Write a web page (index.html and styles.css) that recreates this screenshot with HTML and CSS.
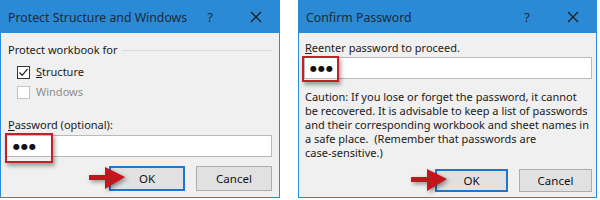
FILE: index.html
```html
<!DOCTYPE html>
<html>
<head>
<meta charset="utf-8">
<link rel="stylesheet" href="styles.css">
</head>
<body>
<div class="page">
  <div class="dialog dialog-left">
    <div class="titlebar">
      <span class="title">Protect Structure and Windows</span>
      <span class="tb-btn">?</span>
      <span class="tb-btn tb-close"><svg width="12" height="12" viewBox="0 0 12 12"><path d="M1 1 L11 11 M11 1 L1 11" stroke="#1a1a1a" stroke-width="1.2" fill="none"/></svg></span>
    </div>
    <div class="body body-left">
      <div class="group-head"><span class="label">Protect workbook for</span><span class="group-line"></span></div>
      <div class="check-row first">
        <span class="checkbox"><svg width="11" height="11" viewBox="0 0 11 11"><path d="M1.5 5.5 L4.2 8.3 L9.6 1.8" stroke="#222" stroke-width="1.3" fill="none"/></svg></span>
        <span class="check-label"><u>S</u>tructure</span>
      </div>
      <div class="check-row disabled">
        <span class="checkbox"></span>
        <span class="check-label">Windows</span>
      </div>
      <div class="label pw-label"><u>P</u>assword (optional):</div>
      <div class="input input-left">
        <span class="dots">&#9679;&#9679;&#9679;</span>
        <span class="highlight hl-left"></span>
      </div>
      <div class="buttons buttons-left">
        <span class="arrow arrow-left"><svg width="40" height="26" viewBox="0 0 40 26"><path d="M1 10 L17 10 L17 2 L37 12 L17 24 L17 15 L1 15 Z" fill="#c4151c"/></svg></span>
        <span class="btn btn-ok">OK</span>
        <span class="btn">Cancel</span>
      </div>
    </div>
  </div>
  <div class="dialog dialog-right">
    <div class="titlebar">
      <span class="title">Confirm Password</span>
      <span class="tb-btn">?</span>
      <span class="tb-btn tb-close"><svg width="12" height="12" viewBox="0 0 12 12"><path d="M1 1 L11 11 M11 1 L1 11" stroke="#1a1a1a" stroke-width="1.2" fill="none"/></svg></span>
    </div>
    <div class="body body-right">
      <div class="label re-label"><u>R</u>eenter password to proceed.</div>
      <div class="input input-right">
        <span class="dots">&#9679;&#9679;&#9679;</span>
        <span class="highlight hl-right"></span>
      </div>
      <div class="caution">Caution: If you lose or forget the password, it cannot<br>be recovered. It is advisable to keep a list of passwords<br>and their corresponding workbook and sheet names in<br>a safe place.&nbsp; (Remember that passwords are<br>case-sensitive.)</div>
      <div class="buttons buttons-right">
        <span class="arrow arrow-right"><svg width="40" height="26" viewBox="0 0 40 26"><path d="M1 10 L17 10 L17 2 L37 12 L17 24 L17 15 L1 15 Z" fill="#c4151c"/></svg></span>
        <span class="btn btn-ok">OK</span>
        <span class="btn">Cancel</span>
      </div>
    </div>
  </div>
</div>
</body>
</html>
```

FILE: styles.css
```css
html, body {
  margin: 0;
  padding: 0;
  background: #ffffff;
}
body {
  width: 600px;
  height: 200px;
  overflow: hidden;
  font-family: "Noto Sans", "Open Sans", sans-serif;
  font-size: 11px;
  color: #1a1a1a;
}
.page {
  display: flex;
  gap: 18px;
  height: 198px;
}
.dialog {
  box-sizing: border-box;
  height: 198px;
  border: 1px solid #2a8ad6;
  background: #f0f0f0;
  display: flex;
  flex-direction: column;
}
.dialog-left { width: 280px; }
.dialog-right { width: 299px; }
.titlebar {
  height: 32px;
  flex: none;
  background: #2a8ad6;
  display: flex;
  align-items: center;
  padding-left: 7px;
  font-size: 12.3px;
  color: #1f2a36;
}
.title { flex: 1; white-space: nowrap; }
.tb-btn {
  width: 46px;
  text-align: center;
  font-size: 13px;
  display: flex;
  justify-content: center;
  align-items: center;
}
.body {
  display: flex;
  flex-direction: column;
}
.body-left { padding: 0 7px 0 5px; }
.body-right { padding: 0 4px 0 5px; }
.label {
  line-height: 16px;
  height: 16px;
  white-space: nowrap;
}
.group-head {
  display: flex;
  align-items: center;
  margin-top: 9px;
  padding-left: 2px;
}
.group-line {
  flex: 1;
  height: 1px;
  background: #dcdcdc;
  margin-left: 5px;
}
.check-row {
  display: flex;
  align-items: center;
  height: 16px;
  padding-left: 11px;
  margin-top: 4px;
}
.check-row.first { margin-top: 6px; }
.checkbox {
  box-sizing: border-box;
  width: 13px;
  height: 13px;
  border: 1px solid #333333;
  background: #ffffff;
  display: flex;
  align-items: center;
  justify-content: center;
}
.check-label { margin-left: 6px; line-height: 16px; }
.disabled .checkbox { border-color: #c4c4c4; }
.disabled .check-label { color: #8d8d8d; }
.pw-label { margin-top: 17px; padding-left: 2px; }
.input {
  position: relative;
  box-sizing: border-box;
  background: #ffffff;
  border: 1px solid #b9b9b9;
  display: flex;
  align-items: center;
}
.input-left { height: 22px; margin-top: 2px; padding-left: 6px; }
.input-right { height: 22px; margin-top: 1px; padding-left: 5px; }
.dots {
  font-size: 8px;
  letter-spacing: 1px;
  color: #111;
  font-family: "DejaVu Sans", sans-serif;
}
.highlight {
  position: absolute;
  box-sizing: border-box;
  border: 2px solid #c4202a;
  box-shadow: 2px 3px 4px rgba(0, 0, 0, 0.35);
}
.hl-left { left: -2px; top: -3px; width: 48px; height: 30px; }
.hl-right { left: -3px; top: -2px; width: 37px; height: 26px; }
.re-label { margin-top: 7px; padding-left: 1px; }
.caution {
  margin-top: 11px;
  line-height: 14px;
  padding-left: 1px;
  white-space: nowrap;
}
.buttons {
  position: relative;
  display: flex;
  justify-content: flex-end;
  gap: 11px;
}
.buttons-left { margin-top: 9px; }
.buttons-right { margin-top: 9px; }
.btn {
  box-sizing: border-box;
  background: #e1e1e1;
  border: 1px solid #adadad;
  display: flex;
  align-items: center;
  justify-content: center;
  color: #111;
  font-size: 11.5px;
}
.buttons-left .btn { width: 76px; height: 25px; }
.buttons-right .btn { width: 73px; height: 23px; }
.btn-ok { border: 2px solid #1b78d0; }
.arrow {
  position: absolute;
  top: -1px;
  filter: drop-shadow(2px 2px 2px rgba(0, 0, 0, 0.4));
}
.arrow-left { left: 82px; }
.arrow-right { left: 106px; top: -2px; }
```
